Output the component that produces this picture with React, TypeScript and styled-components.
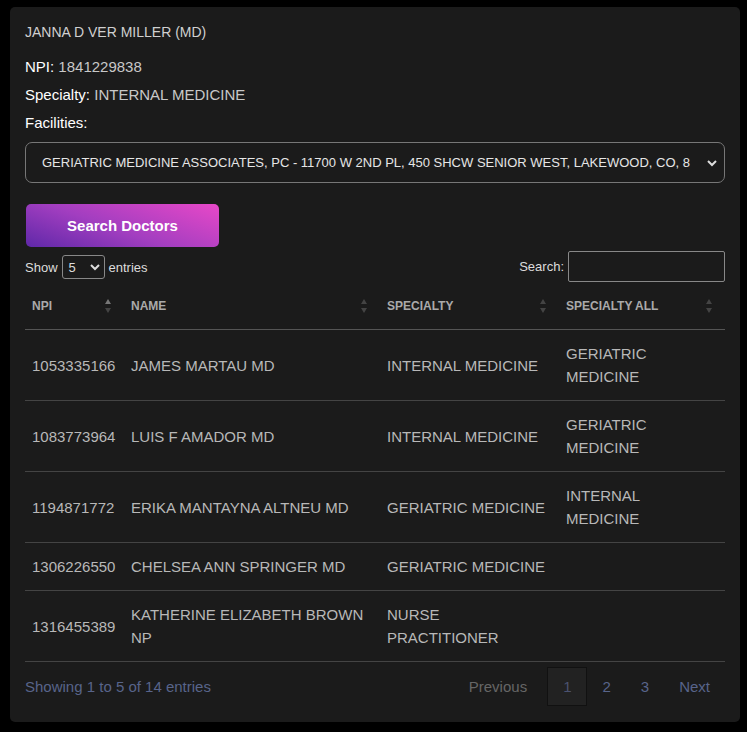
import React from "react";
import styled, { createGlobalStyle } from "styled-components";

const G = createGlobalStyle`
  html,body{margin:0;background:#000;font-family:"Liberation Sans",Arial,sans-serif;}
`;
const Panel = styled.div`
  margin:7px 7px 10px 10px;background:#1b1b1b;border-radius:5px;padding:17px 15px 16px 15px;height:682px;box-sizing:content-box;width:700px;color:#d6d6d6;
`;
const Title = styled.div`font-size:14px;color:#d0d0d0;margin-bottom:18px;`;
const Line = styled.div`font-size:15px;color:#c8c8c8;margin-bottom:11px;b{font-weight:normal;color:#fff;}`;
const Select = styled.div`
  margin-top:5px;height:39px;border:1px solid #777;border-radius:7px;display:flex;align-items:center;padding:0 6px 0 16px;font-size:13px;color:#e6e6e6;white-space:nowrap;overflow:hidden;
  span{flex:1;overflow:hidden;}
`;
const Btn = styled.div`
  margin-top:21px;width:193px;height:43px;border-radius:5px;background:linear-gradient(20deg,#5f28a8 0%,#a23ec0 45%,#e848c8 100%);
  color:#fff;font-weight:bold;font-size:15px;display:flex;align-items:center;justify-content:center;margin-left:1px;
`;
const Controls = styled.div`display:flex;justify-content:space-between;align-items:flex-start;margin-top:4px;font-size:13px;color:#ddd;`;
const Small = styled.div`display:flex;align-items:center;gap:4px;`;
const Mini = styled.div`width:43px;height:24px;border:1px solid #888;border-radius:3px;display:flex;align-items:center;justify-content:space-between;padding:0 3px 0 6px;box-sizing:border-box;font-size:13px;`;
const Input = styled.div`width:157px;height:31px;border:1px solid #888;border-radius:2px;box-sizing:border-box;`;
const Table = styled.table`width:100%;border-collapse:collapse;margin-top:1px;`;
const Th = styled.th`text-align:left;font-size:12px;color:#aaa;font-weight:bold;padding:0 7px;height:46px;border-bottom:1px solid #555;position:relative;`;
const Arr = styled.span`position:absolute;right:12px;top:15px;display:flex;flex-direction:column;gap:2px;`;
const Td = styled.td`font-size:15px;color:#b8b8b8;padding:12px 7px;line-height:23px;border-bottom:1px solid #444;vertical-align:middle;
  &:last-child{padding-right:40px;}`;
const Foot = styled.div`display:flex;justify-content:space-between;align-items:center;margin-top:5px;font-size:15px;color:#58648a;`;
const Pages = styled.div`display:flex;align-items:center;`;
const P = styled.div<{ $a?: boolean; $d?: boolean }>`
  padding:0 15px;height:39px;display:flex;align-items:center;box-sizing:border-box;
  color:${p => p.$d ? "#666" : p.$a ? "#4b5270" : "#58648a"};
  background:${p => p.$a ? "#222" : "none"};border:${p => p.$a ? "1px solid #111" : "none"};
`;

const Sort = ({ up }: { up?: boolean }) => (
  <Arr><svg width="8" height="16" viewBox="0 0 8 16">
    <path d="M4 1L7 6H1Z" fill={up ? "#777" : "#444"} /><path d="M4 15L7 10H1Z" fill="#444" />
  </svg></Arr>
);
const rows = [
  ["1053335166", "JAMES MARTAU MD", "INTERNAL MEDICINE", "GERIATRIC MEDICINE"],
  ["1083773964", "LUIS F AMADOR MD", "INTERNAL MEDICINE", "GERIATRIC MEDICINE"],
  ["1194871772", "ERIKA MANTAYNA ALTNEU MD", "GERIATRIC MEDICINE", "INTERNAL MEDICINE"],
  ["1306226550", "CHELSEA ANN SPRINGER MD", "GERIATRIC MEDICINE", ""],
  ["1316455389", "KATHERINE ELIZABETH BROWN NP", "NURSE PRACTITIONER", ""],
];
const Chev = () => <svg width="12" height="12" viewBox="0 0 12 12"><path d="M2 4l4 4 4-4" stroke="#ddd" strokeWidth="2" fill="none" /></svg>;

export default function App() {
  return (<><G /><Panel>
    <Title>JANNA D VER MILLER (MD)</Title>
    <Line><b>NPI:</b> 1841229838</Line>
    <Line><b>Specialty:</b> INTERNAL MEDICINE</Line>
    <Line><b>Facilities:</b></Line>
    <Select><span>GERIATRIC MEDICINE ASSOCIATES, PC - 11700 W 2ND PL, 450 SHCW SENIOR WEST, LAKEWOOD, CO, 8</span><Chev /></Select>
    <Btn>Search Doctors</Btn>
    <Controls>
      <Small style={{ marginTop: 4 }}>Show <Mini>5<Chev /></Mini> entries</Small>
      <Small>Search: <Input /></Small>
    </Controls>
    <Table>
      <colgroup><col style={{ width: 99 }} /><col style={{ width: 256 }} /><col style={{ width: 179 }} /><col /></colgroup>
      <thead><tr><Th>NPI<Sort up /></Th><Th>NAME<Sort /></Th><Th>SPECIALTY<Sort /></Th><Th>SPECIALTY ALL<Sort /></Th></tr></thead>
      <tbody>{rows.map(r => <tr key={r[0]}>{r.map((c, i) => <Td key={i}>{c}</Td>)}</tr>)}</tbody>
    </Table>
    <Foot>
      <div>Showing 1 to 5 of 14 entries</div>
      <Pages><P $d style={{ marginRight: 5 }}>Previous</P><P $a>1</P><P>2</P><P>3</P><P>Next</P></Pages>
    </Foot>
  </Panel></>);
}
